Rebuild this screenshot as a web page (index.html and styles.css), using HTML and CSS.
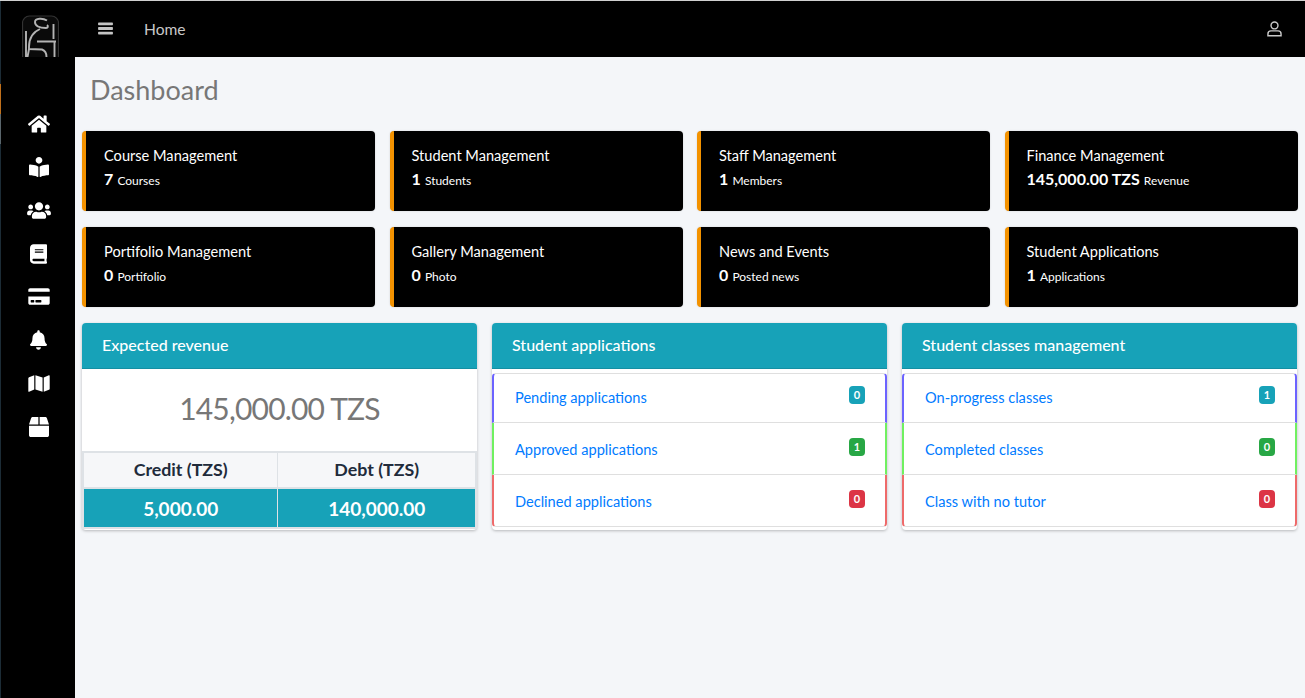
FILE: index.html
```html
<!DOCTYPE html>
<html lang="en">
<head>
<meta charset="utf-8">
<title>Dashboard</title>
<link rel="stylesheet" href="styles.css">
</head>
<body>
<div class="app">
  <aside class="sidebar">
    <div class="logo">
      <svg viewBox="0 0 37 42" width="37" height="42" fill="none" stroke="#b4b4b4" stroke-width="1.9">
        <path d="M.5 42V8a7 7 0 0 1 7-7h22a7 7 0 0 1 7 7v34" fill="#0a0a0a" stroke="#333" stroke-width="1.200"/>
        <path d="M25 5.500C21 3 13 3 13 7c0 4 4 6 11 6 2 0 2.500-2 1-3"/>
        <path d="M18 14C11 17 7 23 7 32v2l13 .5c3 1 4.500 3.500 4.500 7.500"/>
        <path d="M15 26.500h19M32.500 26.500V42M31.500 9v15M4 16v26M7 34l-1.500 8"/>
      </svg>
    </div>
    <nav class="side-nav">
      <a class="side-link"><svg viewBox="0 0 576 512" width="22" height="20"><path d="M280.4 148.3L96 300.1V464a16 16 0 0 0 16 16l112.1-.3a16 16 0 0 0 15.9-16V368a16 16 0 0 1 16-16h64a16 16 0 0 1 16 16v95.6a16 16 0 0 0 16 16.1L464 480a16 16 0 0 0 16-16V300L295.7 148.3a12.2 12.2 0 0 0-15.3 0zM571.6 251.5L488 182.6V44a12 12 0 0 0-12-12h-56a12 12 0 0 0-12 12v72.6L318.5 43a48 48 0 0 0-61 0L4.3 251.5a12 12 0 0 0-1.6 16.9l25.5 31A12 12 0 0 0 45.2 301l235.2-193.7a12.2 12.2 0 0 1 15.3 0L530.9 301a12 12 0 0 0 16.9-1.6l25.5-31a12 12 0 0 0-1.7-16.9z"/></svg></a>
      <a class="side-link"><svg viewBox="0 0 512 512" width="20" height="20"><path d="M342 85c0-47-38-85-86-85s-86 38-86 85 38 85 86 85 86-38 86-85zM233.600 241.100c-59.300-36.300-155.400-46.300-203.800-49.100C13.600 191.100 0 203.500 0 219.200v222.800c0 14.400 11.600 26.400 26.500 27.200 43.700 2.300 132 10.700 193.100 41.500 9.400 4.700 20.400-1.700 20.400-11.800V252.600c0-4.600-2.300-8.900-6.400-11.500zm248.600-49.100c-48.400 2.700-144.500 12.700-203.800 49.100-4.100 2.500-6.400 6.700-6.400 11.300v246.300c0 10.100 11 16.500 20.400 11.800 61.100-30.800 149.400-39.200 193.100-41.500 14.900-.8 26.500-12.800 26.500-27.200V219.200c0-15.700-13.600-28.100-29.800-27.200z"/></svg></a>
      <a class="side-link"><svg viewBox="0 0 640 512" width="24" height="19"><path d="M96 224c35.300 0 64-28.700 64-64s-28.700-64-64-64-64 28.700-64 64 28.700 64 64 64zm448 0c35.300 0 64-28.700 64-64s-28.700-64-64-64-64 28.700-64 64 28.700 64 64 64zm32 32h-64c-17.600 0-33.500 7.100-45.100 18.600 40.300 22.100 68.900 62 75.100 109.400h66c17.700 0 32-14.300 32-32v-32c0-35.300-28.700-64-64-64zm-256 0c61.900 0 112-50.100 112-112S381.900 32 320 32 208 82.100 208 144s50.100 112 112 112zm76.800 32h-8.300c-20.800 10-43.900 16-68.500 16s-47.600-6-68.500-16h-8.300C179.600 288 128 339.600 128 403.200V432c0 26.500 21.500 48 48 48h288c26.500 0 48-21.500 48-48v-28.800c0-63.600-51.600-115.200-115.200-115.200zm-223.700-13.400C161.500 263.100 145.600 256 128 256H64c-35.300 0-64 28.700-64 64v32c0 17.700 14.300 32 32 32h65.900c6.300-47.400 34.900-87.300 75.200-109.400z"/></svg></a>
      <a class="side-link"><svg viewBox="0 0 448 512" width="17" height="20"><path d="M448 360V24c0-13.300-10.700-24-24-24H96C43 0 0 43 0 96v320c0 53 43 96 96 96h328c13.300 0 24-10.700 24-24v-16c0-7.500-3.500-14.300-8.900-18.700-4.200-15.400-4.200-59.300 0-74.700 5.400-4.300 8.900-11.100 8.900-18.600zM128 134c0-3.300 2.700-6 6-6h212c3.300 0 6 2.700 6 6v20c0 3.300-2.700 6-6 6H134c-3.300 0-6-2.700-6-6v-20zm0 64c0-3.300 2.700-6 6-6h212c3.300 0 6 2.700 6 6v20c0 3.300-2.700 6-6 6H134c-3.300 0-6-2.700-6-6v-20zm253.400 250H96c-17.700 0-32-14.300-32-32 0-17.600 14.400-32 32-32h285.400c-1.900 17.100-1.900 46.900 0 64z"/></svg></a>
      <a class="side-link"><svg viewBox="0 0 576 512" width="22" height="19"><path d="M0 432c0 26.500 21.500 48 48 48h480c26.500 0 48-21.500 48-48V256H0v176zm192-68c0-6.600 5.400-12 12-12h136c6.600 0 12 5.400 12 12v40c0 6.600-5.400 12-12 12H204c-6.600 0-12-5.400-12-12v-40zm-128 0c0-6.600 5.400-12 12-12h72c6.600 0 12 5.400 12 12v40c0 6.600-5.400 12-12 12H76c-6.600 0-12-5.400-12-12v-40zM576 80v48H0V80c0-26.500 21.500-48 48-48h480c26.500 0 48 21.500 48 48z"/></svg></a>
      <a class="side-link"><svg viewBox="0 0 448 512" width="17" height="20"><path d="M224 512c35.300 0 64-28.700 64-64H160c0 35.300 28.700 64 64 64zm215.400-149.700c-19.300-20.800-55.500-52-55.500-154.300 0-77.700-54.500-139.900-127.900-155.200V32c0-17.700-14.300-32-32-32s-32 14.300-32 32v20.800C118.600 68.100 64.100 130.300 64.100 208c0 102.300-36.200 133.500-55.500 154.300-6 6.400-8.700 14.100-8.600 21.700.1 16.400 13 32 32.100 32h383.800c19.100 0 32-15.600 32.100-32 .1-7.600-2.600-15.300-8.600-21.700z"/></svg></a>
      <a class="side-link"><svg viewBox="0 0 576 512" width="22" height="19"><path d="M0 117.700V464c0 11.300 11.400 19.100 21.900 14.900L160 416V32L20.100 88C8 92.900 0 104.600 0 117.700zM192 416l192 64V96L192 32v384zM554.100 33.100L416 96v384l139.900-56c12.200-4.900 20.100-16.600 20.100-29.700V48c0-11.300-11.400-19.100-21.900-14.900z"/></svg></a>
      <a class="side-link"><svg viewBox="0 0 512 512" width="20" height="20"><path d="M509.500 184.600L458.900 32.800C452.400 13.200 434.100 0 413.400 0H272v192h238.700c-.4-2.500-.4-5-1.200-7.400zM240 0H98.600c-20.700 0-39 13.200-45.500 32.800L2.500 184.600c-.8 2.400-.8 4.900-1.200 7.400H240V0zM0 224v240c0 26.500 21.500 48 48 48h416c26.500 0 48-21.500 48-48V224H0z"/></svg></a>
    </nav>
  </aside>
  <div class="main">
    <header class="topbar">
      <div class="top-left">
        <svg class="burger" viewBox="0 0 16 14" width="15" height="13"><rect y="0.500" width="16" height="3" rx="0.800"/><rect y="5.500" width="16" height="3" rx="0.800"/><rect y="10.500" width="16" height="3" rx="0.800"/></svg>
        <span class="home">Home</span>
      </div>
      <svg class="user" viewBox="0 0 16 17" width="15" height="16" fill="none" stroke="#c9c9c9" stroke-width="1.500"><circle cx="8" cy="4.700" r="3.700"/><path d="M1 15.700v-2c0-1.800 1.400-3.200 3.200-3.200h7.600c1.800 0 3.200 1.400 3.200 3.200v2z"/></svg>
    </header>
    <main class="content">
      <h1 class="title">Dashboard</h1>
      <section class="stats">
        <div class="stat"><div class="stat-name">Course Management</div><div class="stat-val"><b>7</b> <small>Courses</small></div></div>
        <div class="stat"><div class="stat-name">Student Management</div><div class="stat-val"><b>1</b> <small>Students</small></div></div>
        <div class="stat"><div class="stat-name">Staff Management</div><div class="stat-val"><b>1</b> <small>Members</small></div></div>
        <div class="stat"><div class="stat-name">Finance Management</div><div class="stat-val"><b>145,000.00 TZS</b> <small>Revenue</small></div></div>
        <div class="stat"><div class="stat-name">Portifolio Management</div><div class="stat-val"><b>0</b> <small>Portifolio</small></div></div>
        <div class="stat"><div class="stat-name">Gallery Management</div><div class="stat-val"><b>0</b> <small>Photo</small></div></div>
        <div class="stat"><div class="stat-name">News and Events</div><div class="stat-val"><b>0</b> <small>Posted news</small></div></div>
        <div class="stat"><div class="stat-name">Student Applications</div><div class="stat-val"><b>1</b> <small>Applications</small></div></div>
      </section>
      <section class="panels">
        <div class="panel">
          <div class="panel-head">Expected revenue</div>
          <div class="amount">145,000.00 TZS</div>
          <table class="rev">
            <tr><th class="rev-first">Credit (TZS)</th><th>Debt (TZS)</th></tr>
            <tr><td>5,000.00</td><td>140,000.00</td></tr>
          </table>
        </div>
        <div class="panel">
          <div class="panel-head">Student applications</div>
          <ul class="list">
            <li class="item blue"><a>Pending applications</a><span class="badge teal">0</span></li>
            <li class="item green"><a>Approved applications</a><span class="badge grn">1</span></li>
            <li class="item red"><a>Declined applications</a><span class="badge rd">0</span></li>
          </ul>
        </div>
        <div class="panel">
          <div class="panel-head">Student classes management</div>
          <ul class="list">
            <li class="item blue"><a>On-progress classes</a><span class="badge teal">1</span></li>
            <li class="item green"><a>Completed classes</a><span class="badge grn">0</span></li>
            <li class="item red"><a>Class with no tutor</a><span class="badge rd">0</span></li>
          </ul>
        </div>
      </section>
    </main>
  </div>
</div>
</body>
</html>
```
FILE: styles.css
```css
* { box-sizing: border-box; }
html, body { margin: 0; height: 100%; }
body { font-family: "Lato", "Open Sans", sans-serif; background: #f4f6f9; overflow: hidden; }
.app { display: flex; height: 698px; border-top: 1px solid #d0d0d0; }
.sidebar { width: 75px; flex: none; background: #000; display: flex; flex-direction: column; align-items: center; border-left: 1px solid #1c2c36; border-image: linear-gradient(to bottom, #1c2c36 84px, #c0701c 84px, #c0701c 114px, #5a666c 114px, #5a666c 144px, #1c2c36 144px) 1; }
.logo { height: 58px; padding-top: 14px; margin-left: 4px; }
.logo svg { display: block; }
.side-nav { margin-top: 43px; display: flex; flex-direction: column; margin-left: 1px; }
.side-link { height: 43.3px; width: 40px; display: flex; align-items: center; justify-content: center; fill: #fff; }
.main { flex: 1; min-width: 0; display: flex; flex-direction: column; }
.topbar { height: 56px; background: #000; display: flex; align-items: center; justify-content: space-between; padding: 0 23.500px 1px 23px; flex: none; }
.top-left { display: flex; align-items: center; gap: 31px; }
.burger { fill: #c4c4c4; display: block; }
.home { color: #c8c8c8; font-size: 15.6px; }
.user { display: block; }
.content { padding: 0 8px; }
.title { margin: 14px 0 22px 7px; font-size: 27px; line-height: 38px; font-weight: 400; color: #777; }
.stats { display: grid; grid-template-columns: repeat(4, 293px); column-gap: 14.5px; row-gap: 16px; margin-left: -1px; }
.stat { height: 80px; background: #000; border-left: 4px solid #f39200; border-radius: 4px; color: #fff; padding: 15px 18px; box-shadow: 0 0 2px rgba(0,0,0,.15); }
.stat-name { font-size: 14.6px; line-height: 20px; }
.stat-val { margin-top: 3px; line-height: 20px; font-size: 16px; }
.stat-val b { font-weight: 700; }
.stat-val small { font-size: 12px; }
.panels { margin-top: 16px; margin-left: -1px; display: grid; grid-template-columns: repeat(3, 395px); column-gap: 15px; align-items: start; }
.panel { background: #fff; border-radius: 4px; box-shadow: 0 1px 3px rgba(0,0,0,.25); height: 207px; overflow: hidden; }
.panel-head { height: 46px; background: #17a2b8; color: #fff; font-size: 16px; font-weight: 500; line-height: 44px; padding-left: 20px; border-bottom: 1px solid #148fa3; }
.amount { height: 82px; text-align: center; font-size: 30px; letter-spacing: -0.8px; line-height: 78px; color: #777; }
.rev { width: 100%; border-collapse: collapse; border: 2px solid #dee2e6; table-layout: fixed; }
.rev-first { width: 49.6%; }
.rev th { height: 36px; padding: 0 0 2px; background: #f6f7f9; color: #212b3b; font-size: 17.800px; line-height: 20px; font-weight: 700; border: 1px solid #dee2e6; border-bottom-width: 2px; }
.rev td { height: 40px; padding: 0; background: #17a2b8; color: #fff; font-size: 19px; font-weight: 700; text-align: center; border: 1px solid #dee2e6; border-bottom: 0; }
.list { list-style: none; margin: 4px 0 0; padding: 0; }
.item { height: 52px; background: #fff; border-bottom: 1px solid #dfdfdf; border-left: 2px solid; border-right: 2px solid; padding: 15px 0 0 21px; display: flex; justify-content: space-between; align-items: flex-start; font-size: 14.6px; line-height: 23px; }
.item a { color: #007bff; }
.blue { border-left-color: #6c63ff; border-right-color: #6c63ff; border-top: 1px solid #dfdfdf; border-top-left-radius: 4px; border-top-right-radius: 4px; height: 50px; padding-top: 12px; }
.green { border-left-color: #70f060; border-right-color: #70f060; }
.red { border-left-color: #ee6a6a; border-right-color: #ee6a6a; border-bottom-left-radius: 4px; border-bottom-right-radius: 4px; }
.badge { width: 16px; height: 18px; margin: 0 20px 0 0; border-radius: 4px; color: #fff; font-size: 11px; font-weight: 700; line-height: 18px; text-align: center; }
.teal { background: #17a2b8; }
.grn { background: #28a745; }
.rd { background: #dc3545; }
```
